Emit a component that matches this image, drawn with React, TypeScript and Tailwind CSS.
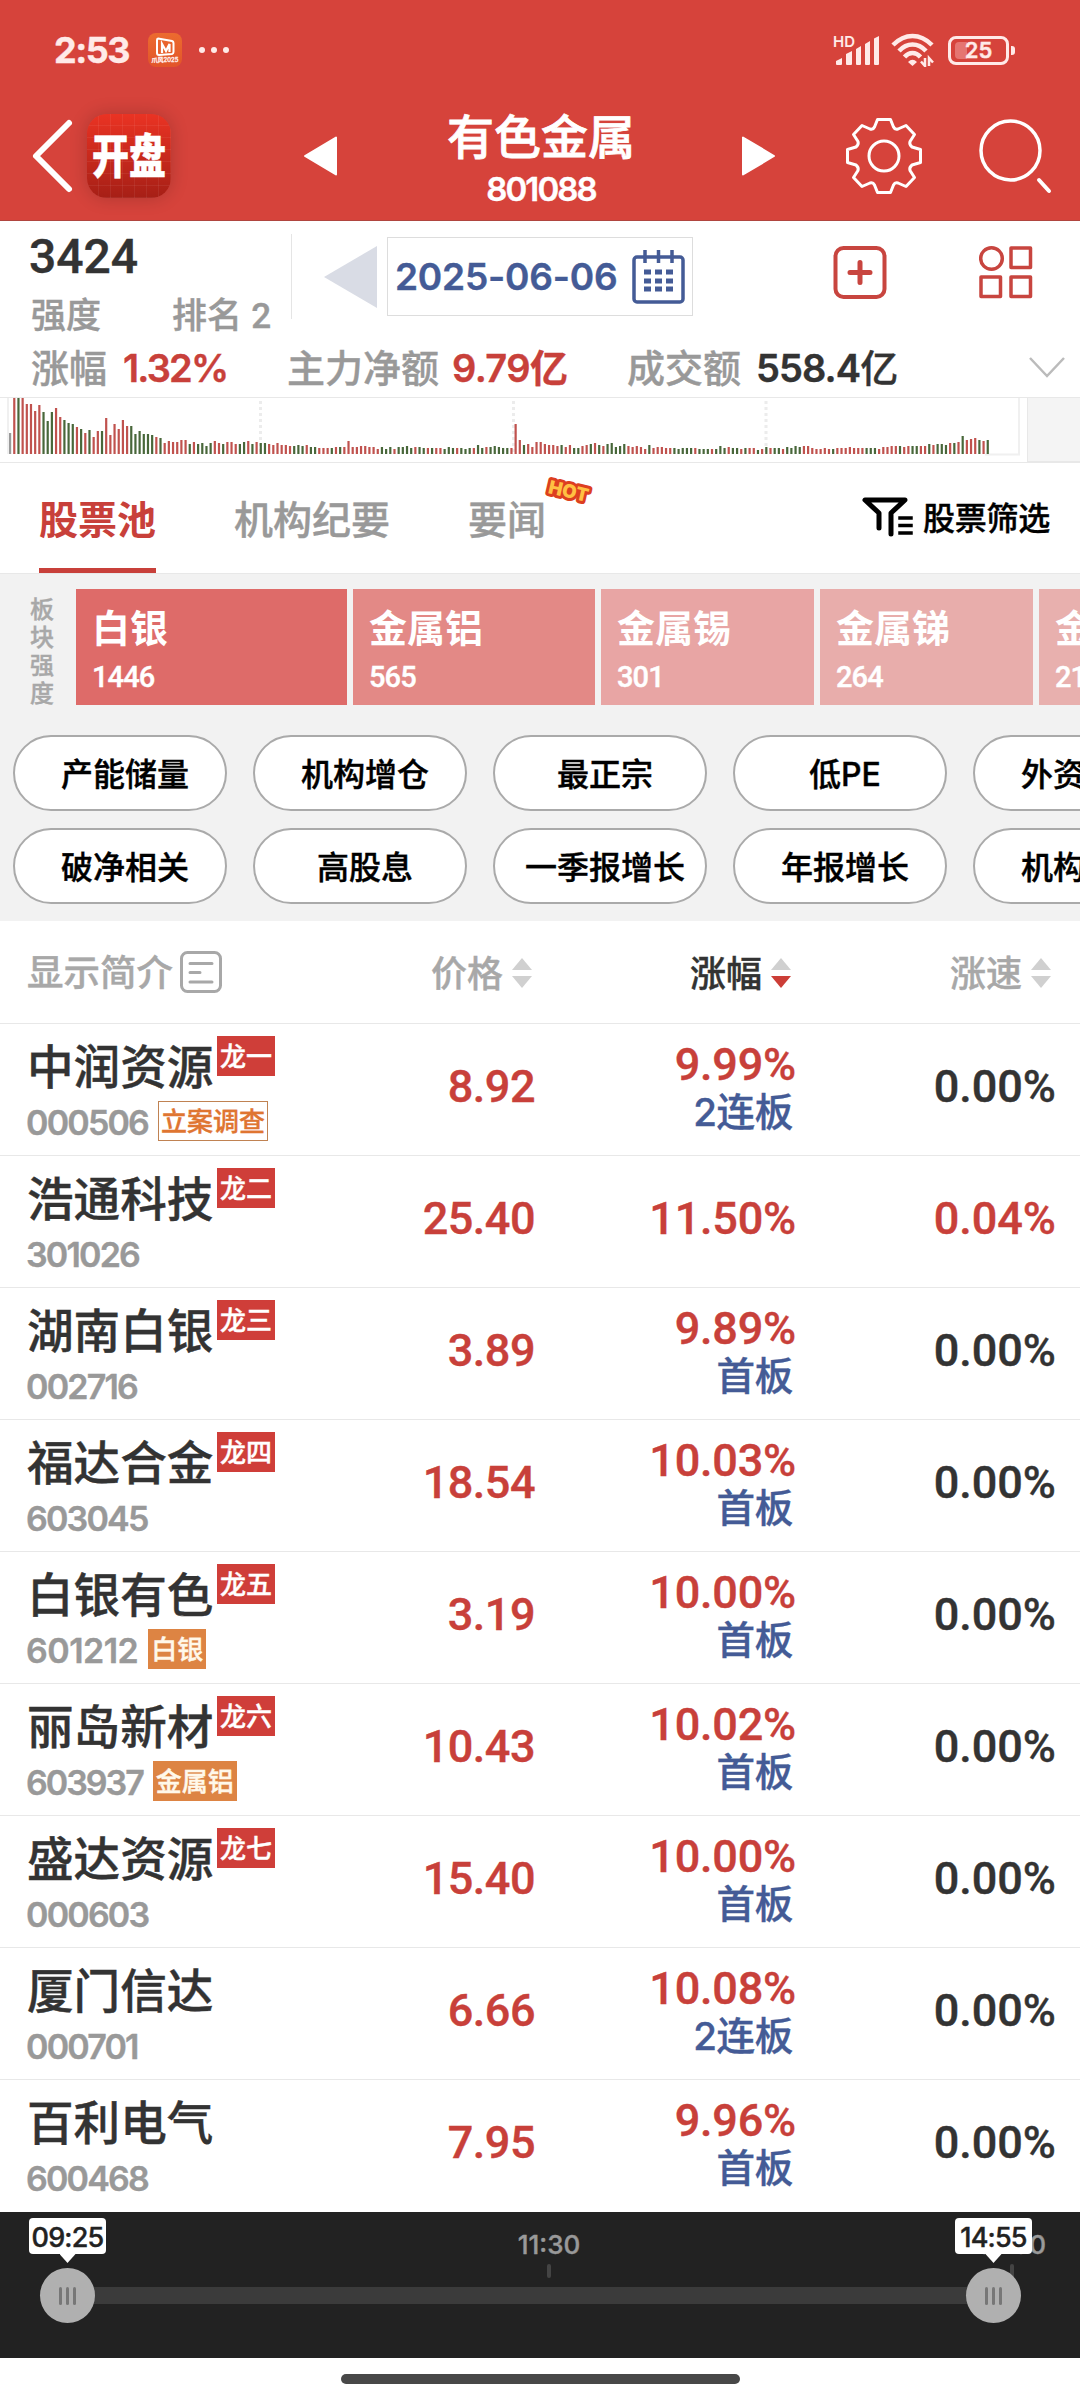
import clsx from 'clsx'

type Stock = {
  name: string
  code: string
  codeClassName?: string
  rank?: string
  tag?: string
  tagOutline?: boolean
  price: string
  change: string
  streak?: string
  speed: string
}

const stocks: Stock[] = [
  { name: '中润资源', code: '000506', rank: '龙一', tag: '立案调查', tagOutline: true, price: '8.92', change: '9.99%', streak: '2连板', speed: '0.00%' },
  { name: '浩通科技', code: '301026', rank: '龙二', price: '25.40', change: '11.50%', speed: '0.04%' },
  { name: '湖南白银', code: '002716', rank: '龙三', price: '3.89', change: '9.89%', streak: '首板', speed: '0.00%' },
  { name: '福达合金', code: '603045', rank: '龙四', price: '18.54', change: '10.03%', streak: '首板', speed: '0.00%' },
  { name: '白银有色', code: '601212', codeClassName: 'tracking-[-0.5px]', rank: '龙五', tag: '白银', price: '3.19', change: '10.00%', streak: '首板', speed: '0.00%' },
  { name: '丽岛新材', code: '603937', codeClassName: 'tracking-[-2px]', rank: '龙六', tag: '金属铝', price: '10.43', change: '10.02%', streak: '首板', speed: '0.00%' },
  { name: '盛达资源', code: '000603', rank: '龙七', price: '15.40', change: '10.00%', streak: '首板', speed: '0.00%' },
  { name: '厦门信达', code: '000701', price: '6.66', change: '10.08%', streak: '2连板', speed: '0.00%' },
  { name: '百利电气', code: '600468', price: '7.95', change: '9.96%', streak: '首板', speed: '0.00%' },
]

const sectors = [
  { name: '白银', value: '1446', className: 'w-[271px] bg-[#de6b69]' },
  { name: '金属铝', value: '565', className: 'w-[242px] bg-[#e38986]' },
  { name: '金属锡', value: '301', className: 'w-[213px] bg-[#e8a5a4]' },
  { name: '金属锑', value: '264', className: 'w-[213px] bg-[#e8adab]' },
  { name: '金属铅', value: '211', className: 'w-[213px] bg-[#e8b0ae]' },
]

const filters = [
  ['产能储量', '机构增仓', '最正宗', '低PE', '外资持股'],
  ['破净相关', '高股息', '一季报增长', '年报增长', '机构持股'],
]

// one entry per bar: r = up, g = down, n = opening auction; number = height in px
const volume = (
  'n21 r56 g56 r56 r50 r50 r43 r49 g42 g33 g42 r46 r37 g34 g31 g30 r27 g25 r21 g24 r17 r23 g23 r36 r19 r30 r25 r34 r28 g28 ' +
  'g20 g23 g20 g20 g19 r17 g16 r11 r13 r12 r12 r14 r14 g10 r12 g10 g11 g8 g11 r13 r11 g10 r12 r12 r10 g10 g12 r13 g10 r12 ' +
  'g11 g11 r10 r9 r11 r9 r9 r8 g8 g9 g8 r9 g7 g7 r6 r6 r6 g6 r7 g7 r7 r13 r7 r7 r8 r8 r7 r7 r5 g7 ' +
  'g5 g7 r5 g7 g7 g8 g6 r7 g7 g6 r6 g6 r6 r6 g5 g7 g6 r6 g6 g5 g6 r6 g9 g6 r7 g7 g8 g7 g6 g6 ' +
  'r6 r30 r14 g9 r10 r7 r12 r12 r10 r9 r9 r8 g9 r7 r9 g6 g6 r8 r9 g10 r11 g9 r8 g10 g11 g7 g8 g10 r8 r7 ' +
  'r8 r7 r5 g9 r6 r7 r7 r6 r6 g6 g5 g6 g6 g6 r6 g5 g5 g5 r5 g5 g8 g6 r7 g6 g6 r5 g6 r6 r6 g4 ' +
  'r5 g7 r6 g6 g6 r5 g7 g6 g8 g7 r8 r8 r6 r5 r5 r6 r5 g5 r6 r6 r6 r7 r6 r6 r6 g6 g6 g6 r5 r7 ' +
  'r7 r8 r8 g8 r7 r8 g8 g8 r8 r8 g10 r9 g10 g10 g9 r11 g11 r12 g18 r14 r15 r16 g14 r13 g14'
).split(' ')

const barColors: Record<string, string> = { r: '#c0524e', g: '#48673a', n: '#999999' }

function StatusBar() {
  return (
    <div className="flex h-[100px] items-center pl-[54px] text-[#ffeae8]">
      <span className="w-[94px] text-[36px] leading-none font-bold tracking-[-1.5px]">2:53</span>
      <div className="flex h-[34px] w-[34px] flex-col items-center rounded-[8px] bg-linear-to-b from-[#ec6b2f] to-[#e2552a] pt-[4px]">
        <svg width="20" height="19" viewBox="0 0 20 19" fill="none" stroke="#fff" strokeWidth="2">
          <path d="M3 1.5 17 4q1.5.5 1.5 2v9q0 1.5-1.5 2L4 18q-2 0-2-2V3q0-1.5 1-1.5Z" />
          <path d="M7 16V7l4 7 3.5-7v8" strokeWidth="2.2" />
        </svg>
        <span className="text-[6px] leading-[7px] whitespace-nowrap">爪风2025</span>
      </div>
      <div className="ml-[17px] flex gap-[6px]">
        <i className="h-[6px] w-[6px] rounded-full bg-current" />
        <i className="h-[6px] w-[6px] rounded-full bg-current" />
        <i className="h-[6px] w-[6px] rounded-full bg-current" />
      </div>
      <svg className="ml-[604px] shrink-0" width="48" height="34" viewBox="0 0 48 34" fill="currentColor">
        <text x="0" y="14" fontSize="15" fontWeight="600" fontFamily="Inter">HD</text>
        <path d="M3 28 9 25v6q0 1-1 1H4q-1 0-1-1ZM13 21l6-3v13q0 1-1 1h-4q-1 0-1-1ZM23 16l5-3v18q0 1-1 1h-3q-1 0-1-1ZM32 11l5-3v23q0 1-1 1h-3q-1 0-1-1ZM41 5.5 46 3v28q0 1-1 1h-3q-1 0-1-1Z" />
      </svg>
      <svg className="ml-[10px] shrink-0" width="44" height="34" viewBox="0 0 44 34" fill="none" stroke="currentColor" strokeWidth="4.5">
        <path d="M2 12Q11 3 21.5 3T41 12" />
        <path d="M8 18Q14 11.5 21.5 11.5T35 18" />
        <path d="M13.5 24Q17 20 21.5 20T29.5 24" />
        <path d="M17 29q4.5-4.5 9 0l-4.5 4Z" fill="currentColor" stroke="none" />
        <path d="M34 25v8l-4-4.5M38 33v-8l4 4.5" strokeWidth="2.5" />
      </svg>
      <div className="relative ml-[13px] flex h-[29px] w-[61px] items-center justify-center rounded-[8px] border-[3px] border-current">
        <i className="absolute top-[3px] left-[4px] h-[17px] w-[12px] rounded-l-[4px] bg-[#e57571]" />
        <span className="relative text-[22px] leading-none font-semibold">25</span>
      </div>
      <i className="ml-[2px] h-[9px] w-[4px] rounded-r-[3px] bg-current" />
    </div>
  )
}

function AppLogo() {
  return (
    <div className="flex h-[84px] w-[84px] items-center justify-center rounded-[20px] bg-[linear-gradient(90deg,transparent_11px,#ffffff0f_11px),linear-gradient(transparent_11px,#ffffff0f_11px),linear-gradient(#ea3323,#a61f16)] bg-[size:12px_12px,12px_12px,100%_100%] shadow-[0_0_18px_#00000030]">
      <span className="scale-y-[1.25] text-[37px] leading-none font-black text-white">开盘</span>
    </div>
  )
}

function Header() {
  return (
    <header className="h-[221px] border-b border-[#b0453f] bg-[#d6433b]">
      <StatusBar />
      <div className="flex h-[112px] items-center text-white">
        <svg className="ml-[30px] shrink-0" width="45" height="80" viewBox="0 0 45 80" fill="none" stroke="#fff" strokeWidth="6" strokeLinecap="round" strokeLinejoin="round">
          <path d="M39 7 6 40l33 33" />
        </svg>
        <div className="ml-[12px]">
          <AppLogo />
        </div>
        <svg className="ml-[132px] shrink-0" width="35" height="40" viewBox="0 0 35 40" fill="#fff" stroke="#fff" strokeWidth="2" strokeLinejoin="round">
          <path d="M2 20 33 1.5v37Z" />
        </svg>
        <div className="ml-[58px] flex h-full w-[290px] flex-col items-center pt-[13px]">
          <h1 className="text-[47px] leading-[48px] font-medium [-webkit-text-stroke:0.8px]">有色金属</h1>
          <span className="mt-[12px] text-[33px] leading-[32px] font-semibold tracking-[-1.9px]">801088</span>
        </div>
        <svg className="ml-[55px] shrink-0" width="35" height="40" viewBox="0 0 35 40" fill="#fff" stroke="#fff" strokeWidth="2" strokeLinejoin="round">
          <path d="M33 20 2 1.5v37Z" />
        </svg>
        <svg className="ml-[68px] shrink-0" width="80" height="80" viewBox="-40 -40 80 80" fill="none" stroke="#fff" strokeWidth="3" strokeLinejoin="round">
          <path d="M-6.5-36.5H6.5L9.5-29Q11-26 14-27L22-30.5 30.5-21.5 26-14.5Q25-11.5 28-9L36.5-6.5V6.5L28 9Q25 11.5 26 14.5L30.5 21.5 22 30.5 14 27Q11 26 9.5 29L6.5 36.5H-6.5L-9.5 29Q-11 26-14 27L-22 30.5-30.5 21.5-26 14.5Q-25 11.5-28 9L-36.5 6.5V-6.5L-28-9Q-25-11.5-26-14.5L-30.5-21.5-22-30.5-14-27Q-11-26-9.5-29Z" />
          <circle r="15" />
        </svg>
        <svg className="ml-[53px] shrink-0" width="80" height="80" viewBox="0 0 80 80" fill="none" stroke="#fff" strokeLinecap="round">
          <circle cx="33.5" cy="34.5" r="29.5" strokeWidth="3.5" />
          <path d="m62 64 10 11" strokeWidth="4" />
        </svg>
      </div>
    </header>
  )
}

function Summary() {
  return (
    <section className="h-[176px]">
      <div className="flex h-[122px]">
        <div className="mt-[13px] ml-[29px] h-[85px] w-[263px] border-r border-[#e5e5e5]">
          <div className="pt-px font-[Roboto,sans-serif] text-[48px] leading-[44px] font-medium text-[#333]">3424</div>
          <div className="mt-[16px] flex pl-[2px] text-[35px] leading-[40px] font-medium text-[#999]">
            <span className="w-[141px]">强度</span>
            <span className="whitespace-pre">排名 <span className="font-[Roboto,sans-serif]">2</span></span>
          </div>
        </div>
        <svg className="mt-[25px] ml-[32px]" width="53" height="62" viewBox="0 0 53 62" fill="#d9dce5">
          <path d="M0 31 53 0v62Z" />
        </svg>
        <div className="mt-[16px] ml-[10px] flex h-[79px] w-[306px] items-center border border-[#ddd] pl-[7px]">
          <span className="w-[237px] text-[37px] leading-none font-semibold tracking-[-0.2px] whitespace-nowrap text-[#445b96]">2025-06-06</span>
          <svg className="shrink-0" width="53" height="54" viewBox="0 0 53 54" fill="none" stroke="#445b96" strokeWidth="3.5">
            <rect x="2" y="7" width="49" height="45" rx="3" />
            <path d="M13 0v13M26.5 0v13M40 0v13" />
            <path d="M12 22h7M23 22h7M34 22h7M12 31h7M23 31h7M34 31h7M12 39h7M23 39h7M34 39h7" strokeWidth="5" />
          </svg>
        </div>
        <svg className="mt-[24px] ml-[140px]" width="54" height="54" viewBox="0 0 54 54" fill="none" stroke="#c8453f" strokeWidth="4" strokeLinecap="round">
          <rect x="2.5" y="3" width="49" height="49" rx="8" />
          <path d="M17 27.5h20M27 17.5v20" strokeWidth="5" />
        </svg>
        <svg className="mt-[24px] ml-[92px]" width="54" height="54" viewBox="0 0 54 54" fill="none" stroke="#c8453f" strokeWidth="3.5" strokeLinejoin="round">
          <circle cx="12.5" cy="13.5" r="10.8" />
          <rect x="32" y="3" width="19.5" height="19.5" />
          <rect x="2" y="32" width="19.5" height="19.5" />
          <rect x="32" y="32" width="19.5" height="19.5" />
        </svg>
      </div>
      <div className="flex h-[50px] items-center pl-[31px] text-[38px] leading-none font-medium whitespace-nowrap text-[#999]">
        <span className="w-[92px]">涨幅</span>
        <span className="w-[164px] font-semibold tracking-[-1.8px] text-[#c8403a]">1.32%</span>
        <span className="w-[165px]">主力净额</span>
        <span className="w-[175px] font-semibold tracking-[-0.6px] text-[#c8403a]">9.79亿</span>
        <span className="w-[129px]">成交额</span>
        <span className="w-[272px] tracking-[-0.9px] text-[#333]"><span className="font-semibold">558.4</span>亿</span>
        <svg width="38" height="24" viewBox="0 0 38 24" fill="none" stroke="#bbb" strokeWidth="2.5">
          <path d="m2 2 17 18L36 2" />
        </svg>
      </div>
    </section>
  )
}

function VolumeChart() {
  return (
    <section className="flex h-[66px] justify-between border-y border-[#e8e8e8]">
      <svg width="1026" height="64" viewBox="0 0 1026 64">
        <path d="M8 0v56M1019 0v56.5H985" fill="none" stroke="#f0f0f0" strokeWidth="2" />
        <path d="M260.5 3v53M513.5 3v53M766 3v53" stroke="#ececec" strokeWidth="3" strokeDasharray="3 3" />
        {volume.map((bar, i) => {
          const height = Number(bar.slice(1))
          return <rect key={i} x={9 + i * 4.178} y={56 - height} width="2.2" height={height} fill={barColors[bar[0]]} />
        })}
      </svg>
      <div className="w-[53px] border-b border-l border-[#e8e8e8] bg-[#f4f4f4]" />
    </section>
  )
}

function Tabs() {
  return (
    <nav className="flex h-[111px] border-b border-[#e8e8e8] pl-[39px] text-[39px] leading-none font-medium text-[#999]">
      <span className="border-b-[5px] border-[#c8403a] pt-[37px] font-bold text-[#c8403a] [-webkit-text-stroke:0px]">股票池</span>
      <span className="ml-[78px] pt-[37px]">机构纪要</span>
      <span className="relative ml-[78px] pt-[37px]">
        要闻
        <svg className="absolute top-[8px] left-[76px]" width="52" height="36" viewBox="0 0 52 36">
          <text x="4" y="22" transform="rotate(13 4 20)" fontSize="18.5" fontWeight="900" fontFamily="Inter" fill="#ffc043" stroke="#dd3f20" strokeWidth="6" strokeLinejoin="round" paintOrder="stroke">HOT</text>
        </svg>
      </span>
      <div className="ml-[316px] flex items-center gap-[9px] pt-[2px] text-[32px] text-black">
        <svg className="-mt-[4px]" width="52" height="42" viewBox="0 0 52 42" fill="none" stroke="#000" strokeWidth="5" strokeLinecap="round" strokeLinejoin="round">
          <path d="M17 32V17L3 4H43L29 17V38" />
          <path d="M38 22h11M38 29.5h11M38 37h11" strokeWidth="3.5" strokeLinecap="square" />
        </svg>
        <span className="tracking-[-0.3px]">股票筛选</span>
      </div>
    </nav>
  )
}

function SectorStrip() {
  return (
    <section className="h-[347px] overflow-hidden bg-[#f2f2f2] pt-[15px]">
      <div className="flex h-[116px]">
        <div className="flex w-[76px] shrink-0 justify-center pt-[7px] pl-[8px]">
          <span className="w-[24px] text-[24px] leading-[28px] font-medium text-[#a8a8a8]">板块强度</span>
        </div>
        <div className="flex gap-[6px]">
          {sectors.map((s) => (
            <div key={s.name} className={clsx('h-[116px] shrink-0 pt-[19px] pl-[16px] text-white', s.className)}>
              <div className="text-[38px] leading-[40px] font-bold [-webkit-text-stroke:0px]">{s.name}</div>
              <div className="mt-[13px] font-[Roboto,sans-serif] text-[29px] leading-[32px] font-medium tracking-[-0.9px]">{s.value}</div>
            </div>
          ))}
        </div>
      </div>
      <div className="mt-[30px] ml-[13px] flex flex-col gap-[17px]">
        {filters.map((row, i) => (
          <div key={i} className="flex gap-[26px]">
            {row.map((label) => (
              <button
                key={label}
                className="h-[76px] w-[214px] shrink-0 rounded-full border-2 border-[#aaa] bg-white pt-[3px] pl-[10px] text-center text-[32px] leading-none font-medium whitespace-nowrap text-black"
              >
                {label}
              </button>
            ))}
          </div>
        ))}
      </div>
    </section>
  )
}

function SortHeader({ label, active }: { label: string; active?: boolean }) {
  return (
    <div className={clsx('flex items-center justify-end gap-[9px]', active ? 'text-[#333]' : 'text-[#a8a8a8]')}>
      <span className="pt-[2px]">{label}</span>
      <svg width="20" height="30" viewBox="0 0 20 30">
        <path d="M0 12 10 0l10 12Z" fill="#d0d0d0" />
        <path d="M0 18h20L10 30Z" fill={active ? '#cc3e37' : '#d0d0d0'} />
      </svg>
    </div>
  )
}

function StockRow({ stock }: { stock: Stock }) {
  return (
    <div className="grid h-[132px] grid-cols-[300px_235px_261px_260px] border-t border-[#e8e8e8] font-medium">
      <div className="pl-[27px]">
        <div className="flex items-start pt-[12px] whitespace-nowrap">
          <span className="w-[190px] pt-[7px] text-[46.6px] leading-[48px] text-[#333]">{stock.name}</span>
          {stock.rank && (
            <span className="flex h-[40px] w-[58px] items-center justify-center bg-[#cf3e39] pt-[2px] text-[26px] leading-none text-white">
              {stock.rank}
            </span>
          )}
        </div>
        <div className="mt-[10px] flex h-[40px] items-center">
          <span className={clsx('-ml-px pt-[3px] text-[34px] leading-none font-semibold text-[#999]', stock.codeClassName ?? 'tracking-[-1.8px]')}>
            {stock.code}
          </span>
          {stock.tag && (
            <span
              className={clsx(
                'ml-[10px] flex h-[40px] items-center border px-[2px] pt-px text-[26px] leading-none whitespace-nowrap',
                stock.tagOutline ? 'border-[#c08252] text-[#df7531]' : 'border-[#dd8443] bg-[#dd8443] text-[#fff8ea]',
              )}
            >
              {stock.tag}
            </span>
          )}
        </div>
      </div>
      <span className="pt-[39px] text-right font-[Roboto,sans-serif] text-[45px] leading-[48px] tracking-[-0.5px] text-[#c8403a]">{stock.price}</span>
      <div className={clsx('flex flex-col items-end', stock.streak ? 'pt-[17px]' : 'pt-[39px]')}>
        <span className="font-[Roboto,sans-serif] text-[45px] leading-[48px] tracking-[-0.2px] text-[#c8403a]">{stock.change}</span>
        {stock.streak && (
          <span className="pr-[3px] text-[38.5px] leading-[46px] tracking-[-0.3px] text-[#445b96]">
            {stock.streak}
          </span>
        )}
      </div>
      <span
        className={clsx(
          'pt-[39px] text-right font-[Roboto,sans-serif] text-[45px] leading-[48px]',
          stock.speed === '0.00%' ? 'text-[#333]' : 'text-[#c8403a]',
        )}
      >
        {stock.speed}
      </span>
    </div>
  )
}

function StockTable() {
  return (
    <section className="pb-px">
      <div className="grid h-[102px] grid-cols-[300px_232px_259px_260px] items-center pt-px text-[36px] leading-none font-medium">
        <div className="flex items-center gap-[7px] pl-[27px] text-[36.5px] text-[#a8a8a8]">
          <span className="pt-[2px]">显示简介</span>
          <svg width="43" height="43" viewBox="0 0 43 43" fill="none" stroke="#a8a8a8" strokeWidth="3" strokeLinecap="round">
            <rect x="1.5" y="1.5" width="39" height="39" rx="6" />
            <path d="M10 12.5h22M10 21.5h10M10 31h22" />
          </svg>
        </div>
        <SortHeader label="价格" />
        <SortHeader label="涨幅" active />
        <SortHeader label="涨速" />
      </div>
      {stocks.map((stock) => (
        <StockRow key={stock.code} stock={stock} />
      ))}
    </section>
  )
}

function Thumb({ time, className }: { time: string; className: string }) {
  return (
    <div className={clsx('absolute top-[6px] flex w-[77px] flex-col items-center', className)}>
      <span className="flex h-[36px] w-[77px] items-center justify-center rounded-[4px] bg-white pt-[3px] text-[27px] leading-none font-medium tracking-[-0.8px] text-[#222]">
        {time}
      </span>
      <i className="h-[9px] w-[16px] bg-white [clip-path:polygon(0_0,100%_0,50%_100%)]" />
      <span className="mt-[5px] flex h-[55px] w-[55px] items-center justify-center gap-[4px] rounded-full bg-[#b0b0b0]">
        <i className="h-[18px] w-[3px] rounded bg-[#777]" />
        <i className="h-[18px] w-[3px] rounded bg-[#777]" />
        <i className="h-[18px] w-[3px] rounded bg-[#777]" />
      </span>
    </div>
  )
}

function TimeSlider() {
  return (
    <section className="relative h-[146px] bg-[#222] pt-[20px]">
      <div className="flex justify-between pr-[34px] pl-[515px] text-[26px] leading-[26px] font-medium text-[#999]">
        {['11:30', '15:00'].map((time) => (
          <div key={time} className="flex w-[68px] flex-col items-center gap-[6px]">
            <span>{time}</span>
            <i className="h-[14px] w-[4px] rounded bg-[#444]" />
          </div>
        ))}
      </div>
      <div className="mt-[9px] ml-[68px] h-[17px] w-[925px] bg-[#3b3b3b]" />
      <Thumb time="09:25" className="left-[29px]" />
      <Thumb time="14:55" className="left-[955px]" />
    </section>
  )
}

export default function App() {
  return (
    <div className="h-[2400px] w-[1080px] overflow-hidden bg-white font-[Inter,'Noto_Sans_CJK_SC',sans-serif] [-webkit-text-stroke:0.4px]">
      <Header />
      <Summary />
      <VolumeChart />
      <Tabs />
      <SectorStrip />
      <StockTable />
      <TimeSlider />
      <div className="flex h-[42px] justify-center bg-white pt-[16px]">
        <div className="h-[10px] w-[399px] rounded-full bg-[#484848]" />
      </div>
    </div>
  )
}
